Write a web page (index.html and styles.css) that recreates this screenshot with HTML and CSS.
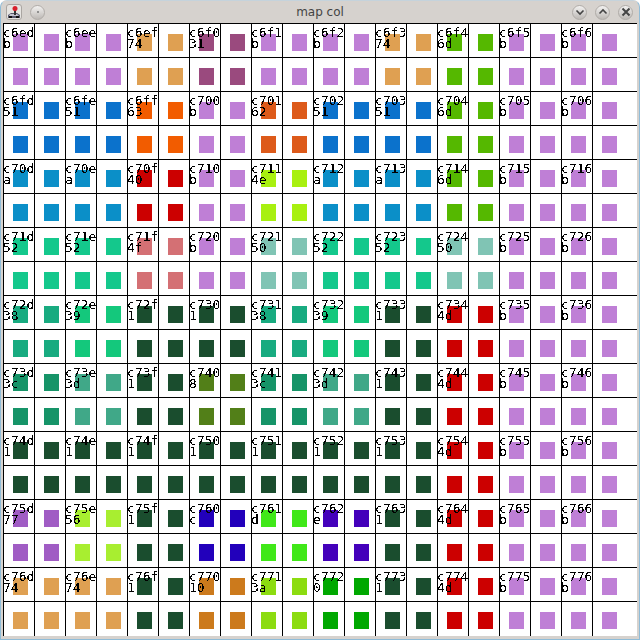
FILE: index.html
```html
<!DOCTYPE html>
<html lang="en">
<head>
  <meta charset="UTF-8">
  <title>map col</title>
  <link rel="stylesheet" href="styles.css">
</head>
<body>
  <svg class="defs" width="0" height="0">
    <!-- the reference text has no antialiasing -->
    <filter id="crisp" x="0" y="0" width="100%" height="100%">
      <feComponentTransfer>
        <feFuncA type="discrete" tableValues="0 1"></feFuncA>
      </feComponentTransfer>
    </filter>
  </svg>

  <div class="window">
    <div class="titlebar">
      <div class="titlebar-left">
        <div class="app-icon">
          <svg width="14" height="14" viewBox="0 0 14 14">
            <path d="M1 13 L1 10 L4 8 L10 8 L13 10 L13 13 Z" fill="#5a5a6e"/>
            <path d="M3 9 L10 9 L12 11 L2 11 Z" fill="#c4c4d0"/>
            <rect x="7" y="4" width="2" height="6" fill="#333"/>
            <circle cx="8" cy="3.5" r="2.5" fill="#d8202c"/>
            <rect x="2" y="11" width="3" height="2" fill="#111"/>
            <rect x="9" y="11" width="3" height="2" fill="#111"/>
          </svg>
        </div>
        <div class="btn"><span class="dot"></span></div>
      </div>
      <div class="title">map col</div>
      <div class="titlebar-right">
        <div class="btn">
          <svg width="10" height="10" viewBox="0 0 10 10"><path d="M1.5 3.5 L5 7 L8.5 3.5" class="glyph"/></svg>
        </div>
        <div class="btn">
          <svg width="10" height="10" viewBox="0 0 10 10"><path d="M1.5 6.5 L5 3 L8.5 6.5" class="glyph"/></svg>
        </div>
        <div class="btn">
          <svg width="10" height="10" viewBox="0 0 10 10"><path d="M1.5 1.5 L8.5 8.5 M8.5 1.5 L1.5 8.5" class="glyph glyph-x"/></svg>
        </div>
      </div>
    </div>
    <div class="map" id="map"></div>
  </div>

  <script>
    const colors = {
      'b': '#bf7fd6', '74': '#dfa052', '31': '#9a4a7e', '6d': '#55b800',
      '51': '#0b72cc', '63': '#f25c00', '62': '#dd5a1a', 'a': '#0b8fc8',
      '40': '#cc0000', '4d': '#cc0000', '4e': '#a8f010', '4f': '#d47074',
      '50': '#80c4b4', '52': '#14c88c', '38': '#18ab80', '39': '#14c87c',
      '1': '#1a4d2e', '3c': '#169468', '3d': '#40a888', '8': '#527f18',
      '77': '#a05cc4', '56': '#a8ee30', 'c': '#2200bb', 'd': '#40e818',
      'e': '#4400bb', '10': '#cc7a1c', '3a': '#8cdc10', '0': '#00a800'
    };

    const rows = [
      [0xc6ed, 'b b 74 31 b b 74 6d b b'],
      [0xc6fd, '51 51 63 b 62 51 51 6d b b'],
      [0xc70d, 'a a 40 b 4e a a 6d b b'],
      [0xc71d, '52 52 4f b 50 52 52 50 b b'],
      [0xc72d, '38 39 1 1 38 39 1 4d b b'],
      [0xc73d, '3c 3d 1 8 3c 3d 1 4d b b'],
      [0xc74d, '1 1 1 1 1 1 1 4d b b'],
      [0xc75d, '77 56 1 c d e 1 4d b b'],
      [0xc76d, '74 74 1 10 3a 0 1 4d b b']
    ];

    function cell(value, label) {
      const text = label ? `<div class="label">${label}<br>${value}</div>` : '';
      return `<div class="cell">${text}<div class="square" style="background-color: ${colors[value]}"></div></div>`;
    }

    let html = '';
    rows.forEach(([start, values]) => {
      const list = values.split(' ');
      // each value fills a block of 2x2 cells, only the first one has a label
      html += list.map((v, i) => cell(v, (start + i).toString(16)) + cell(v)).join('');
      html += list.map(v => cell(v) + cell(v)).join('');
    });
    document.getElementById('map').innerHTML = html;
  </script>
</body>
</html>
```

FILE: styles.css
```css
html, body {
  margin: 0;
  padding: 0;
  height: 100%;
  background-color: #fff;
}
.defs {
  position: absolute;
}
.window {
  width: 640px;
  height: 640px;
  box-sizing: border-box;
  padding: 0 2px 3px 2px;
  background-color: #d6d2ce;
  border: 1px solid #8fbcd8;
  border-top-color: #c5d3dc;
  border-radius: 7px 7px 0 0;
  display: flex;
  flex-direction: column;
}
.titlebar {
  height: 22px;
  display: flex;
  align-items: center;
  justify-content: space-between;
  position: relative;
  padding: 0 4px 0 3px;
  background-color: #d6d2ce;
}
.titlebar-left, .titlebar-right {
  display: flex;
  align-items: center;
  gap: 8px;
}
.app-icon {
  box-sizing: border-box;
  width: 16px;
  height: 16px;
  border-radius: 3px;
  background-color: #e6e4e1;
  border: 1px solid #aaa6a2;
}
.app-icon svg {
  display: block;
}
.btn {
  box-sizing: border-box;
  width: 15px;
  height: 15px;
  border-radius: 50%;
  background: linear-gradient(#f2f1f0, #bdb9b5);
  border: 1px solid #b0aca8;
  display: flex;
  align-items: center;
  justify-content: center;
}
.dot {
  width: 2px;
  height: 2px;
  border-radius: 50%;
  background-color: #777;
}
.glyph {
  fill: none;
  stroke: #444;
  stroke-width: 1.6;
}
.glyph-x {
  stroke-width: 2;
}
.title {
  position: absolute;
  left: 0;
  right: 0;
  text-align: center;
  font-family: "DejaVu Sans", sans-serif;
  font-size: 12px;
  color: #444;
}
.map {
  flex: 1;
  display: grid;
  grid-template-columns: repeat(19, 31px) 1fr;
  grid-template-rows: repeat(17, 34px) 1fr;
  background-color: #fff;
  overflow: hidden;
}
.cell {
  position: relative;
  box-sizing: border-box;
  border-left: 1px solid #000;
  border-top: 1px solid #000;
  padding: 10px 0 0 9px;
}
.square {
  width: 15px;
  height: 17px;
}
.label {
  position: absolute;
  left: -1px;
  top: 3px;
  z-index: 1;
  width: 34px;
  font-family: "DejaVu Sans Mono", monospace;
  font-size: 13px;
  line-height: 11px;
  color: #000;
  filter: url(#crisp);
}
```
